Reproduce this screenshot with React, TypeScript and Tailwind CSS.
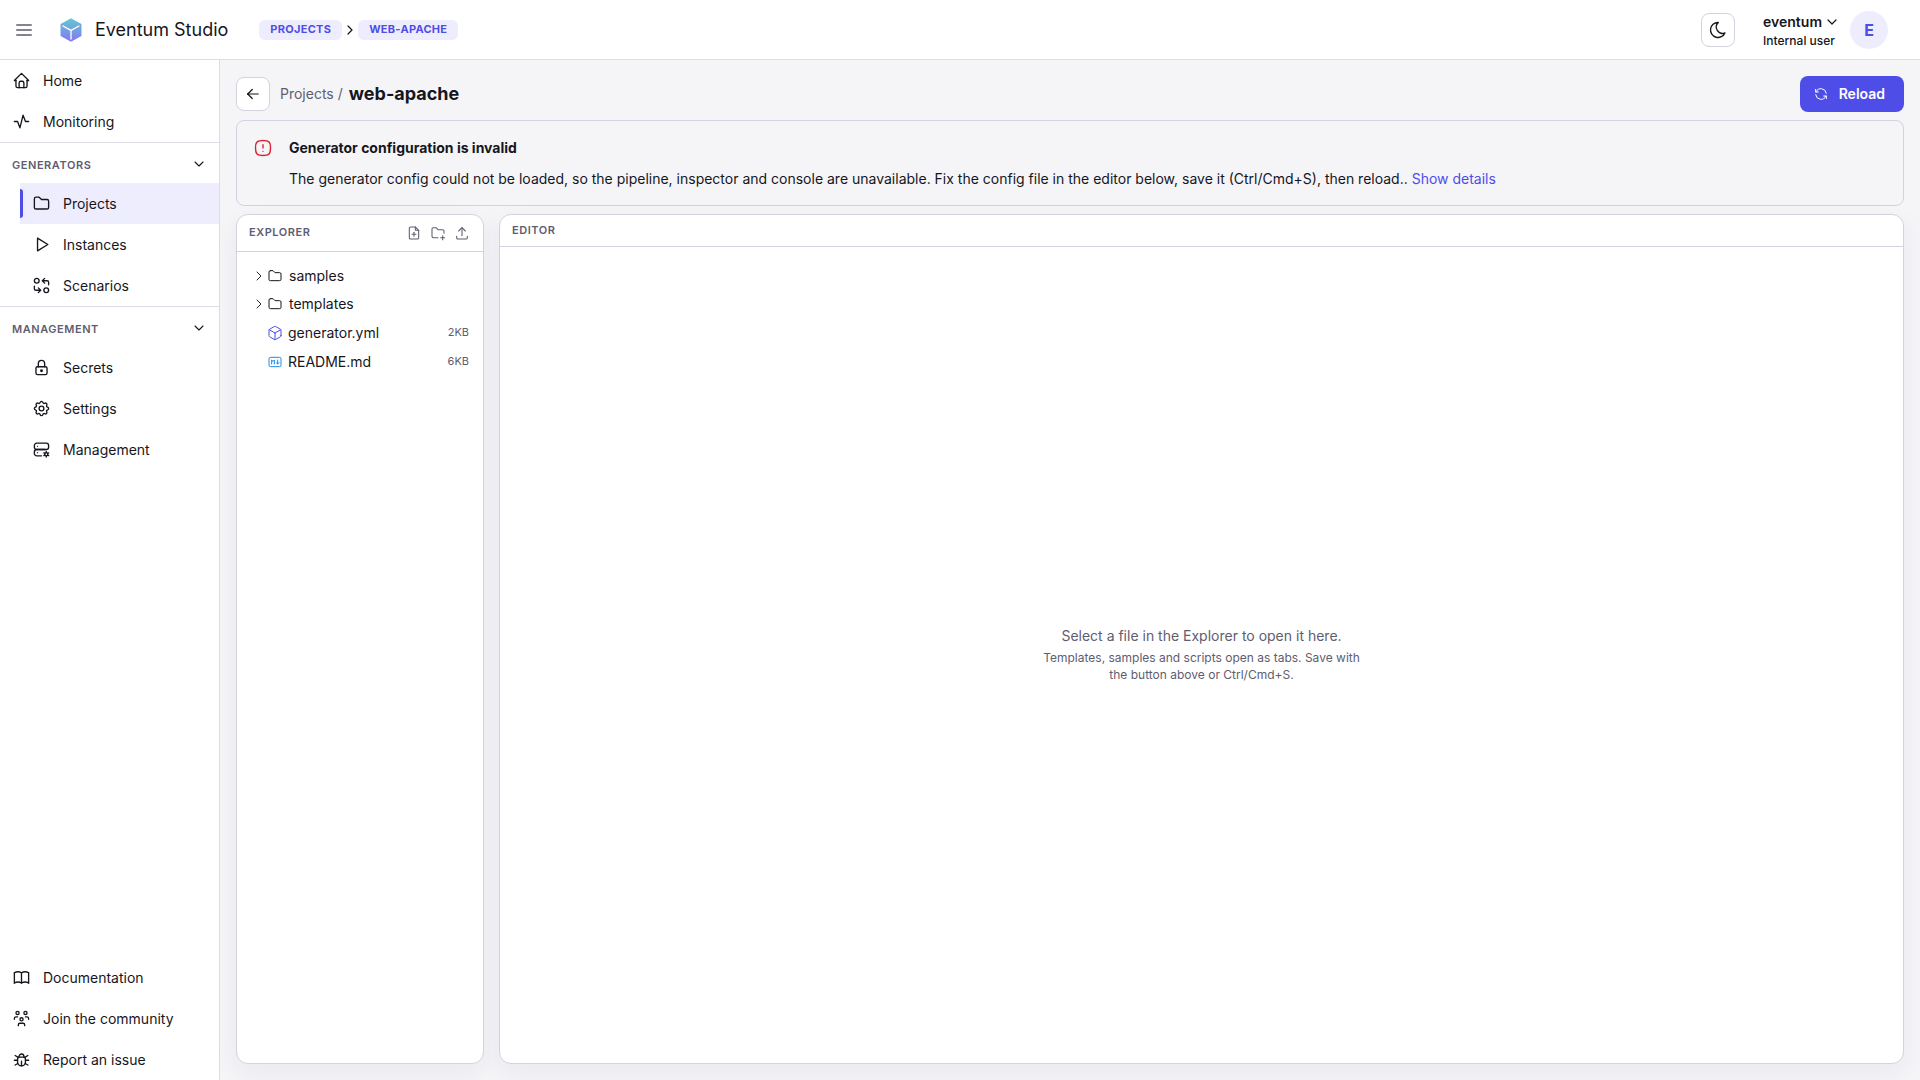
import { useState } from 'react';
import type { ReactNode } from 'react';
import type { IconType } from 'react-icons';
import {
  TbActivity,
  TbAlertSquareRounded,
  TbArrowLeft,
  TbBook,
  TbBug,
  TbChevronDown,
  TbChevronRight,
  TbCube,
  TbFilePlus,
  TbFolder,
  TbFolderPlus,
  TbHome,
  TbLock,
  TbMarkdown,
  TbMoon,
  TbPlayerPlay,
  TbRefresh,
  TbServerCog,
  TbSettings,
  TbTransform,
  TbUpload,
  TbUsersGroup,
} from 'react-icons/tb';

type NavItem = {
  label: string;
  icon: IconType;
  active?: boolean;
};

type FileItem = {
  name: string;
  size: string;
  icon: IconType;
  color: string;
};

const mainLinks: NavItem[] = [
  { label: 'Home', icon: TbHome },
  { label: 'Monitoring', icon: TbActivity },
];

const generatorLinks: NavItem[] = [
  { label: 'Projects', icon: TbFolder, active: true },
  { label: 'Instances', icon: TbPlayerPlay },
  { label: 'Scenarios', icon: TbTransform },
];

const managementLinks: NavItem[] = [
  { label: 'Secrets', icon: TbLock },
  { label: 'Settings', icon: TbSettings },
  { label: 'Management', icon: TbServerCog },
];

const footerLinks: NavItem[] = [
  { label: 'Documentation', icon: TbBook },
  { label: 'Join the community', icon: TbUsersGroup },
  { label: 'Report an issue', icon: TbBug },
];

const folders = ['samples', 'templates'];

const files: FileItem[] = [
  { name: 'generator.yml', size: '2KB', icon: TbCube, color: 'text-[#4f4de8]' },
  { name: 'README.md', size: '6KB', icon: TbMarkdown, color: 'text-[#228be6]' },
];

function Logo() {
  return (
    <svg width="24" height="26" viewBox="0 0 24 26" aria-hidden="true">
      <defs>
        <linearGradient id="logo" x1="0" y1="0" x2="0" y2="1">
          <stop offset="0" stopColor="#63c5d2" />
          <stop offset="1" stopColor="#8579f5" />
        </linearGradient>
      </defs>
      <path
        d="M12 2.4 L21.6 7.6 V18.4 L12 23.6 L2.4 18.4 V7.6 Z"
        fill="url(#logo)"
        stroke="url(#logo)"
        strokeWidth="1.8"
        strokeLinejoin="round"
      />
      <path d="M4 9 L12 13.4 L20 9 M12 13.4 V22" fill="none" stroke="#fff" strokeWidth="1.3" strokeLinecap="round" />
    </svg>
  );
}

function NavLink({ item }: { item: NavItem }) {
  const Icon = item.icon;
  return (
    <a
      href="#"
      className={`relative flex h-[41px] items-center gap-3 px-3 text-sm ${
        item.active ? 'bg-[#eeedfd]' : 'hover:bg-[#f5f5f8]'
      }`}
    >
      {item.active && <span className="absolute inset-y-1.5 left-0 w-[3px] rounded-r-sm bg-[#4f4de8]" />}
      <Icon size={19} strokeWidth={1.7} />
      {item.label}
    </a>
  );
}

function NavSection({ title, items }: { title: string; items: NavItem[] }) {
  const [open, setOpen] = useState<boolean>(true);

  return (
    <div className="border-t border-[#dcdce4]">
      <button
        onClick={() => setOpen(!open)}
        aria-expanded={open}
        className="flex h-10 w-full items-center justify-between px-3 pt-0.5 text-[11px] font-semibold tracking-wider text-[#5f5d70]"
      >
        <span className="pt-0.5">{title}</span>
        <TbChevronDown size={16} strokeWidth={1.6} className="text-[#16161d]" />
      </button>
      {open && (
        <div className="pl-5">
          {items.map((item) => (
            <NavLink key={item.label} item={item} />
          ))}
        </div>
      )}
    </div>
  );
}

function Crumb({ children }: { children: ReactNode }) {
  return (
    <a
      href="#"
      className="flex h-5 items-center rounded-md bg-[#eeedfd] px-[11px] text-[11px] font-bold tracking-wide text-[#4f4de8]"
    >
      {children}
    </a>
  );
}

function ToolButton({ icon: Icon, label }: { icon: IconType; label: string }) {
  return (
    <button aria-label={label} className="flex size-6 items-center justify-center text-[#5f5d70]">
      <Icon size={16} strokeWidth={1.6} />
    </button>
  );
}

function Header() {
  return (
    <header className="flex h-[60px] shrink-0 items-center border-b border-[#dcdce4] bg-white px-4">
      <button aria-label="Toggle navigation" className="flex w-4 flex-col gap-[3px]">
        <span className="h-0.5 rounded-sm bg-[#85838f]" />
        <span className="h-0.5 rounded-sm bg-[#85838f]" />
        <span className="h-0.5 rounded-sm bg-[#85838f]" />
      </button>
      <a href="#" className="ml-[27px] flex items-center gap-3 text-lg">
        <Logo />
        Eventum Studio
      </a>
      <nav aria-label="Breadcrumb" className="ml-[31px] flex items-center">
        <Crumb>PROJECTS</Crumb>
        <TbChevronRight size={16} strokeWidth={1.8} />
        <Crumb>WEB-APACHE</Crumb>
      </nav>
      <button
        aria-label="Toggle color scheme"
        className="ml-auto flex size-[34px] items-center justify-center rounded-lg border border-[#d3d2de] bg-white"
      >
        <TbMoon size={20} strokeWidth={1.6} />
      </button>
      <button className="mr-4 ml-7 flex items-center gap-2.5 text-left">
        <span className="flex flex-col pt-0.5">
          <span className="flex items-center gap-0.5 text-sm leading-5 font-semibold">
            eventum
            <TbChevronDown size={16} strokeWidth={1.8} />
          </span>
          <span className="text-xs leading-[18px] font-medium">Internal user</span>
        </span>
        <span className="flex size-[38px] items-center justify-center rounded-full bg-[#eeedfd] font-bold text-[#4f4de8]">
          E
        </span>
      </button>
    </header>
  );
}

function Sidebar() {
  return (
    <nav className="flex w-[220px] shrink-0 flex-col border-r border-[#dcdce4] bg-white">
      {mainLinks.map((item) => (
        <NavLink key={item.label} item={item} />
      ))}
      <NavSection title="GENERATORS" items={generatorLinks} />
      <NavSection title="MANAGEMENT" items={managementLinks} />
      <div className="mt-auto">
        {footerLinks.map((item) => (
          <NavLink key={item.label} item={item} />
        ))}
      </div>
    </nav>
  );
}

function Explorer() {
  return (
    <section className="w-[248px] shrink-0 rounded-xl border border-[#d3d2de] bg-white shadow-[0_8px_24px_rgba(40,38,80,0.06)]">
      <div className="flex h-[37px] items-center justify-between border-b border-[#d3d2de] pr-[9px] pl-3">
        <h2 className="pb-0.5 text-[11px] font-semibold tracking-wider text-[#5f5d70]">EXPLORER</h2>
        <div className="flex">
          <ToolButton icon={TbFilePlus} label="New file" />
          <ToolButton icon={TbFolderPlus} label="New folder" />
          <ToolButton icon={TbUpload} label="Upload" />
        </div>
      </div>
      <ul className="px-3.5 py-2.5 text-sm">
        {folders.map((name) => (
          <li key={name}>
            <button className="flex h-7 w-full items-center">
              <TbChevronRight size={16} strokeWidth={1.4} />
              <TbFolder size={16} strokeWidth={1.5} className="mr-1.5" />
              {name}
            </button>
          </li>
        ))}
        {files.map(({ name, size, icon: Icon, color }) => (
          <li key={name}>
            <button className="flex h-[29px] w-full items-center pl-4">
              <Icon size={16} strokeWidth={1.5} className={`mr-[5px] ${color}`} />
              {name}
              <span className="ml-auto text-[11px] text-[#5f5d70]">{size}</span>
            </button>
          </li>
        ))}
      </ul>
    </section>
  );
}

function Editor() {
  return (
    <section className="flex min-w-0 flex-1 flex-col rounded-xl border border-[#d3d2de] bg-white shadow-[0_8px_24px_rgba(40,38,80,0.06)]">
      <div className="flex h-8 items-center border-b border-[#d3d2de] px-3">
        <h2 className="text-[11px] font-semibold tracking-wider text-[#5f5d70]">EDITOR</h2>
      </div>
      <div className="flex flex-1 flex-col items-center justify-center gap-[3px] pb-0.5 text-center text-[#5f5d70]">
        <p className="text-sm">Select a file in the Explorer to open it here.</p>
        <p className="max-w-xs text-xs leading-[17px]">
          Templates, samples and scripts open as tabs. Save with the button above or Ctrl/Cmd+S.
        </p>
      </div>
    </section>
  );
}

export default function App() {
  return (
    <div className="flex h-screen flex-col bg-[#f5f5f8] font-['Inter',sans-serif] text-[#16161d]">
      <Header />
      <div className="flex min-h-0 flex-1">
        <Sidebar />
        <main className="flex min-w-0 flex-1 flex-col gap-2 p-4">
          <div className="flex items-center">
            <button
              aria-label="Back"
              className="flex size-[34px] items-center justify-center rounded-lg border border-[#d3d2de] bg-white"
            >
              <TbArrowLeft size={18} strokeWidth={1.6} />
            </button>
            <a href="#" className="mr-1.5 ml-2.5 text-sm text-[#5f5d70]">
              Projects /
            </a>
            <h1 className="text-lg font-bold">web-apache</h1>
            <button className="ml-auto flex h-9 items-center gap-2.5 rounded-lg bg-[#4f4de8] pr-[19px] pl-[13px] text-sm font-semibold text-white">
              <TbRefresh size={16} strokeWidth={1.5} />
              Reload
            </button>
          </div>

          {/* Config error */}
          <div role="alert" className="flex gap-4 rounded-lg border border-[#d3d2de] px-4 pt-4 pb-[15px] text-sm">
            <TbAlertSquareRounded size={20} strokeWidth={1.7} className="mt-px shrink-0 text-[#dc2637]" />
            <div className="flex flex-col gap-[9px]">
              <p className="leading-[22px] font-bold">Generator configuration is invalid</p>
              <p className="leading-[22px]">
                The generator config could not be loaded, so the pipeline, inspector and console are unavailable. Fix the
                config file in the editor below, save it (Ctrl/Cmd+S), then reload..{' '}
                <button className="text-[#4f4de8]">Show details</button>
              </p>
            </div>
          </div>

          <div className="flex min-h-0 flex-1 gap-[15px]">
            <Explorer />
            <Editor />
          </div>
        </main>
      </div>
    </div>
  );
}
